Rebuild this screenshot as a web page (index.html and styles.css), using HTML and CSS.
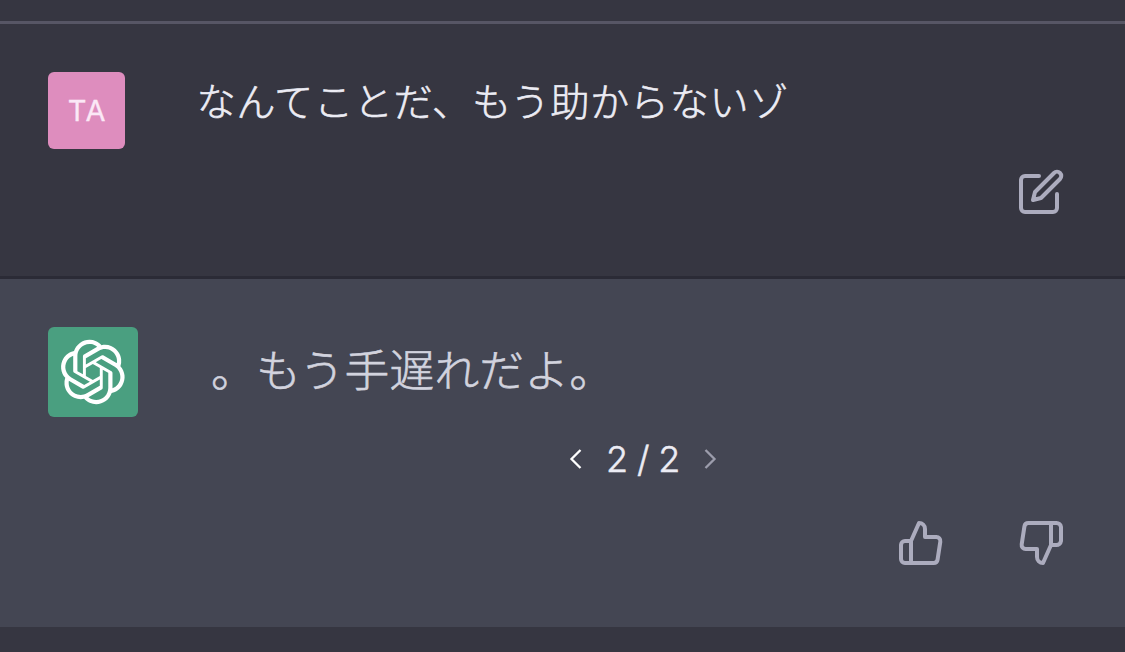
FILE: index.html
```html
<!DOCTYPE html>
<html lang="ja">
<head>
<meta charset="utf-8">
<title>Chat</title>
<link rel="stylesheet" href="styles.css">
</head>
<body>
<header class="topbar"></header>
<main>
  <section class="message user">
    <div class="row">
      <div class="avatar initials">TA</div>
      <p class="text">なんてことだ、もう助からないゾ</p>
    </div>
    <div class="actions">
      <svg class="icon" viewBox="0 0 24 24"><path d="M11 4H4a2 2 0 0 0-2 2v14a2 2 0 0 0 2 2h14a2 2 0 0 0 2-2v-7"/><path d="M18.5 2.5a2.121 2.121 0 0 1 3 3L12 15l-4 1 1-4 9.5-9.5z"/></svg>
    </div>
  </section>
  <section class="message assistant">
    <div class="row">
      <div class="avatar logo">
        <svg viewBox="0 0 41 41"><path d="M37.532 16.8707C37.9808 15.5241 38.1363 14.0974 37.9886 12.6859C37.8409 11.2744 37.3934 9.91076 36.676 8.68622C35.6126 6.83404 33.9882 5.3676 32.0373 4.4985C30.0864 3.62941 27.9098 3.40259 25.8215 3.85078C24.8796 2.7893 23.7219 1.94125 22.4257 1.36341C21.1295 0.785575 19.7249 0.491269 18.3058 0.500197C16.1708 0.495044 14.0893 1.16803 12.3614 2.42214C10.6335 3.67624 9.34853 5.44666 8.6917 7.47815C7.30085 7.76286 5.98686 8.3414 4.8377 9.17505C3.68854 10.0087 2.73073 11.0782 2.02839 12.312C0.956464 14.1591 0.498905 16.2988 0.721698 18.4228C0.944492 20.5467 1.83612 22.5449 3.268 24.1293C2.81966 25.4759 2.66413 26.9026 2.81182 28.3141C2.95951 29.7256 3.40701 31.0892 4.12437 32.3138C5.18791 34.1659 6.8123 35.6322 8.76321 36.5013C10.7141 37.3704 12.8907 37.5973 14.9789 37.1492C15.9208 38.2107 17.0786 39.0587 18.3747 39.6366C19.6709 40.2144 21.0755 40.5087 22.4946 40.4998C24.6307 40.5054 26.7133 39.8321 28.4418 38.5772C30.1704 37.3223 31.4556 35.5506 32.1119 33.5179C33.5027 33.2332 34.8167 32.6547 35.9659 31.821C37.115 30.9874 38.0728 29.9178 38.7752 28.684C39.8458 26.8371 40.3023 24.6979 40.0789 22.5748C39.8556 20.4517 38.9639 18.4544 37.532 16.8707ZM22.4978 37.8849C20.7443 37.8874 19.0459 37.2733 17.6994 36.1501C17.7601 36.117 17.8666 36.0586 17.936 36.0161L25.9004 31.4156C26.1003 31.3019 26.2663 31.137 26.3813 30.9378C26.4964 30.7386 26.5563 30.5124 26.5549 30.2825V19.0542L29.9213 20.998C29.9389 21.0068 29.9541 21.0198 29.9656 21.0359C29.977 21.052 29.9842 21.0707 29.9867 21.0902V30.3889C29.9842 32.375 29.1946 34.2791 27.7909 35.6841C26.3872 37.0892 24.4838 37.8806 22.4978 37.8849ZM6.39227 31.0064C5.51397 29.4888 5.19742 27.7107 5.49804 25.9832C5.55718 26.0187 5.66048 26.0818 5.73461 26.1244L13.699 30.7248C13.8975 30.8408 14.1233 30.902 14.3532 30.902C14.583 30.902 14.8088 30.8408 15.0073 30.7248L24.731 25.1103V28.9979C24.7321 29.0177 24.7283 29.0376 24.7199 29.0556C24.7115 29.0736 24.6988 29.0893 24.6829 29.1012L16.6317 33.7497C14.9096 34.7416 12.8643 35.0097 10.9447 34.4954C9.02506 33.9811 7.38785 32.7263 6.39227 31.0064ZM4.29707 13.6194C5.17156 12.0998 6.55279 10.9364 8.19885 10.3327C8.19885 10.4013 8.19491 10.5228 8.19491 10.6071V19.808C8.19351 20.0378 8.25334 20.2638 8.36823 20.4629C8.48312 20.6619 8.64893 20.8267 8.84863 20.9404L18.5723 26.5542L15.206 28.4979C15.1894 28.5089 15.1703 28.5155 15.1505 28.5173C15.1307 28.5191 15.1107 28.516 15.0924 28.5082L7.04046 23.8557C5.32135 22.8601 4.06716 21.2235 3.55289 19.3046C3.03862 17.3858 3.30624 15.3413 4.29707 13.6194ZM31.955 20.0556L22.2312 14.4411L25.5976 12.4981C25.6142 12.4872 25.6333 12.4805 25.6531 12.4787C25.6729 12.4769 25.6928 12.4801 25.7111 12.4879L33.7631 17.1364C34.9967 17.849 36.0017 18.8982 36.6606 20.1613C37.3194 21.4244 37.6047 22.849 37.4832 24.2684C37.3617 25.6878 36.8382 27.0432 35.9743 28.1759C35.1103 29.3086 33.9415 30.1717 32.6047 30.6641C32.6047 30.5947 32.6047 30.4733 32.6047 30.3889V21.188C32.6066 20.9586 32.5474 20.7328 32.4332 20.5338C32.319 20.3348 32.154 20.1698 31.955 20.0556ZM35.3055 15.0128C35.2464 14.9765 35.1431 14.9142 35.069 14.8717L27.1045 10.2712C26.906 10.1554 26.6803 10.0943 26.4504 10.0943C26.2206 10.0943 25.9948 10.1554 25.7963 10.2712L16.0726 15.8858V11.9982C16.0715 11.9783 16.0753 11.9585 16.0837 11.9405C16.0921 11.9225 16.1048 11.9068 16.1207 11.8949L24.1719 7.25025C25.4053 6.53903 26.8158 6.19376 28.2383 6.25482C29.6608 6.31589 31.0364 6.78077 32.2044 7.59508C33.3723 8.40939 34.2842 9.53945 34.8334 10.8531C35.3826 12.1667 35.5464 13.6095 35.3055 15.0128ZM14.2424 21.9419L10.8752 19.9981C10.8576 19.9893 10.8423 19.9763 10.8309 19.9602C10.8195 19.9441 10.8122 19.9254 10.8098 19.9058V10.6071C10.8107 9.18295 11.2173 7.78848 11.9819 6.58696C12.7466 5.38544 13.8377 4.42659 15.1275 3.82264C16.4173 3.21869 17.8524 2.99464 19.2649 3.1767C20.6775 3.35876 22.0089 3.93941 23.1034 4.85067C23.0427 4.88379 22.937 4.94215 22.8668 4.98473L14.9024 9.58517C14.7025 9.69878 14.5366 9.86356 14.4215 10.0626C14.3065 10.2616 14.2466 10.4877 14.2479 10.7175L14.2424 21.9419ZM16.071 17.9991L20.4018 15.4978L24.7325 17.9975V22.9985L20.4018 25.4983L16.071 22.9985V17.9991Z"/></svg>
      </div>
      <p class="text">。もう手遅れだよ。</p>
    </div>
    <nav class="pager">
      <svg class="chevron" viewBox="0 0 14 22"><path d="M11.5 2 2.5 11l9 9"/></svg>
      <span class="count">2 / 2</span>
      <svg class="chevron next" viewBox="0 0 14 22"><path d="m2.5 2 9 9-9 9"/></svg>
    </nav>
    <div class="actions">
      <svg class="icon" viewBox="0 0 24 24"><path d="M14 9V5a3 3 0 0 0-3-3l-4 9v11h11.28a2 2 0 0 0 2-1.7l1.38-9a2 2 0 0 0-2-2.3zM7 22H4a2 2 0 0 1-2-2v-7a2 2 0 0 1 2-2h3"/></svg>
      <svg class="icon" viewBox="0 0 24 24"><path d="M10 15v4a3 3 0 0 0 3 3l4-9V2H5.72a2 2 0 0 0-2 1.7l-1.38 9a2 2 0 0 0 2 2.3zm7-13h2.67A2.31 2.31 0 0 1 22 4v7a2.31 2.31 0 0 1-2.33 2H17"/></svg>
    </div>
  </section>
</main>
</body>
</html>
```
FILE: styles.css
```css
* { box-sizing: border-box; }

body {
  margin: 0;
  height: 652px;
  overflow: hidden;
  background: #363641;
  font-family: Inter, "Noto Sans CJK JP", sans-serif;
}

svg { display: block; flex: none; }

.topbar {
  height: 24px;
  border-bottom: 3px solid #575665;
}

.message {
  display: flex;
  flex-direction: column;
  padding: 48px 60px 0 48px;
}

.user {
  height: 255px;
  border-bottom: 3px solid #2b2b36;
}

.assistant {
  height: 348px;
  background: #444653;
}

.row {
  display: flex;
  align-items: flex-start;
}

.avatar {
  display: flex;
  flex: none;
  align-items: center;
  justify-content: center;
  border-radius: 6px;
}

.initials {
  width: 77px;
  height: 77px;
  padding-left: 2px;
  background: #de8dbe;
  color: #fbe8f6;
  font: 400 29px/1 Inter, sans-serif;
  letter-spacing: 1.5px;
  -webkit-text-stroke: 0.3px currentColor;
}

.logo {
  width: 90px;
  height: 90px;
  background: #4a9f80;
}

.logo svg {
  width: 66px;
  height: 66px;
  fill: #fff;
}

.text {
  margin: 0;
  font-family: "Noto Sans CJK JP", sans-serif;
  font-weight: 300;
  white-space: nowrap;
  -webkit-text-stroke: 0.6px currentColor;
}

.user .text {
  padding: 0 0 0 71.5px;
  color: #ececf4;
  font-size: 39.2px;
  line-height: 55px;
  letter-spacing: 0.6px;
}

.assistant .text {
  padding: 8px 0 0 73px;
  color: #d2d3de;
  font-size: 44.8px;
  line-height: 65px;
  letter-spacing: 0.15px;
}

.actions {
  display: flex;
  justify-content: flex-end;
  gap: 72px;
  margin-top: 19px;
}

.icon {
  width: 48px;
  height: 48px;
  fill: none;
  stroke: #acacbe;
  stroke-width: 2;
  stroke-linecap: round;
  stroke-linejoin: round;
}

.pager {
  display: flex;
  align-items: center;
  gap: 23px;
  height: 44px;
  margin: 20px 0 0 521px;
  color: #ececf4;
}

.count {
  font-size: 36px;
  font-weight: 300;
  line-height: 44px;
  word-spacing: -1.3px;
  white-space: nowrap;
  -webkit-text-stroke: 0.5px currentColor;
}

.chevron {
  width: 14px;
  height: 22px;
  fill: none;
  stroke: #fff;
  stroke-width: 2.3;
}

.next { stroke: #9c9dac; }

.assistant .actions { margin-top: 38px; }
```
